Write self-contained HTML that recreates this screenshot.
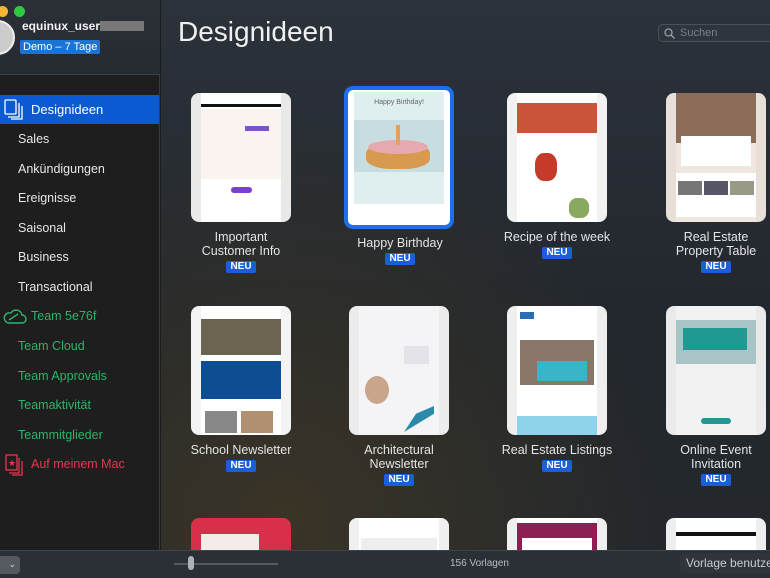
<!DOCTYPE html>
<html><head><meta charset="utf-8"><style>
*{margin:0;padding:0;box-sizing:border-box}
body{width:770px;height:578px;overflow:hidden;position:relative;font-family:"Liberation Sans",sans-serif;background:#1c1c1e}
.side{position:absolute;left:0;top:0;width:160px;height:550px;background:#1e1e1e;border-right:1px solid #3a3a3a}
.shead{position:absolute;left:0;top:0;width:160px;height:75px;background:linear-gradient(#2b3036,#262b31);border-bottom:1px solid #3c4046}
.main{position:absolute;left:161px;top:0;width:609px;height:550px;background:radial-gradient(ellipse at 20% 95%,#3a3426 0%,rgba(40,40,36,0) 55%),linear-gradient(#2c323a,#22272d 60%,#24282c)}
.it{position:absolute;font-size:12.5px;color:#e6e6e6;left:18px}
.g{color:#2fb36a}
.card{position:absolute;width:100px;height:129px;background:#e9e9e9;border-radius:8px;overflow:hidden}
.pg{position:absolute;left:10px;right:10px;top:0;bottom:0;background:#fff}
.b{position:absolute}
.lbl{position:absolute;width:160px;text-align:center;font-size:12.5px;color:#e4e4e4;line-height:14px}
.neu{display:inline-block;background:#1b5fd6;color:#fff;font-weight:bold;font-size:10px;padding:0 4px;line-height:12px;border-radius:2px}
.bar{position:absolute;left:0;top:550px;width:770px;height:28px;background:#2b3036;border-top:1px solid #3f444a}
</style></head><body>
<div class="side">
 <div class="shead">
  <div style="position:absolute;left:-3px;top:6px;width:11px;height:11px;border-radius:50%;background:#f5b731"></div>
  <div style="position:absolute;left:14px;top:6px;width:11px;height:11px;border-radius:50%;background:#2ec841"></div>
  <div style="position:absolute;left:-20px;top:20px;width:35px;height:35px;border-radius:50%;background:#ccc;border:2px solid #eee"></div>
  <div style="position:absolute;left:22px;top:19px;font-size:12px;font-weight:bold;color:#f2f2f2">equinux_user<span style="display:inline-block;width:44px;height:10px;background:#777;vertical-align:-1px"></span></div>
  <div style="position:absolute;left:20px;top:40px;background:#1a74d6;color:#fff;font-size:11px;padding:1px 3px;border-radius:2px">Demo – 7 Tage</div>
 </div>
 <div style="position:absolute;left:0;top:95px;width:159px;height:29px;background:#0b5ad4"></div>
 <svg style="position:absolute;left:3px;top:98px" width="22" height="22" viewBox="0 0 22 22" fill="none" stroke="#fff" stroke-width="1.3"><rect x="2" y="2" width="11" height="14" rx="1"/><path d="M5 19h11V5"/><path d="M8 21h11V8"/></svg>
 <div class="it" style="left:31px;top:102px;color:#fff;font-size:13px">Designideen</div>
 <div class="it" style="top:132px">Sales</div>
 <div class="it" style="top:162px">Ankündigungen</div>
 <div class="it" style="top:191px">Ereignisse</div>
 <div class="it" style="top:221px">Saisonal</div>
 <div class="it" style="top:250px">Business</div>
 <div class="it" style="top:280px">Transactional</div>
 <svg style="position:absolute;left:2px;top:306px" width="26" height="20" viewBox="0 0 26 20" fill="none" stroke="#2fb36a" stroke-width="1.4"><path d="M6 17h14a4 4 0 0 0 0-8 6 6 0 0 0-11-2 5 5 0 0 0-3 10z"/><path d="M7 14l9-6"/></svg>
 <div class="it g" style="left:31px;top:309px">Team 5e76f</div>
 <div class="it g" style="top:339px">Team Cloud</div>
 <div class="it g" style="top:369px">Team Approvals</div>
 <div class="it g" style="top:398px">Teamaktivität</div>
 <div class="it g" style="top:428px">Teammitglieder</div>
 <svg style="position:absolute;left:4px;top:453px" width="20" height="24" viewBox="0 0 20 24" fill="none" stroke="#e2384f" stroke-width="1.3"><rect x="2" y="2" width="11" height="15"/><path d="M5 20h10V5"/><path d="M8 22h10V8"/><text x="4" y="13" fill="#e2384f" stroke="none" font-size="9">★</text></svg>
 <div class="it" style="left:31px;top:457px;color:#e2384f">Auf meinem Mac</div>
</div>
<div class="main">
 <div style="position:absolute;left:17px;top:16px;font-size:28px;color:#f0f0f0">Designideen</div>
 <div style="position:absolute;left:497px;top:24px;width:120px;height:18px;border:1px solid #4a5058;border-radius:5px;background:#2f353c;color:#7b8088;font-size:11px;padding:2px 0 0 21px">Suchen
  <svg style="position:absolute;left:5px;top:3px" width="11" height="11" viewBox="0 0 11 11" fill="none" stroke="#9a9fa6" stroke-width="1.3"><circle cx="4.5" cy="4.5" r="3.5"/><path d="M7 7l3.5 3.5"/></svg></div>
</div>

<div class="card" style="left:191px;top:93px"><div class="pg" style="background:#fff"><div class="b" style="left:0;right:0;top:11px;height:3px;background:#111"></div><div class="b" style="left:0;right:0;top:16px;height:70px;background:#fbf3ef"></div><div class="b" style="left:44px;top:33px;width:24px;height:5px;background:#7a55c8"></div><div class="b" style="left:30px;top:94px;width:21px;height:6px;border-radius:3px;background:#7a3fd0"></div></div></div>
<div style="position:absolute;left:344px;top:86px;width:110px;height:143px;border:4px solid #1d6ff0;border-radius:9px;background:#fff;overflow:hidden"><div class="b" style="left:6px;top:2px;width:90px;height:112px;background:#dfeff0"></div><div class="b" style="left:6px;top:30px;width:90px;height:52px;background:#c7dde0"></div><div class="b" style="left:18px;top:53px;width:64px;height:26px;border-radius:40%;background:#d79a4f"></div><div class="b" style="left:20px;top:50px;width:60px;height:14px;border-radius:50%;background:#e6a9b0"></div><div class="b" style="left:48px;top:35px;width:4px;height:20px;background:#e0a060"></div><div style="position:absolute;left:0;width:102px;top:9px;text-align:center;font-size:7px;color:#666">Happy Birthday!</div></div>
<div class="card" style="left:507px;top:93px;background:#f2f2f2"><div class="pg"><div class="b" style="left:0;right:0;top:10px;height:30px;background:#c8553a"></div><div class="b" style="left:18px;top:60px;width:22px;height:28px;background:#c53a2a;border-radius:40%"></div><div class="b" style="left:52px;top:105px;width:20px;height:20px;background:#8aa860;border-radius:40%"></div></div></div>
<div class="card" style="left:666px;top:93px;background:#e8e0d8"><div class="pg" style="background:#efe7df"><div class="b" style="left:0;right:0;top:0;height:50px;background:#8c6b58"></div><div class="b" style="left:5px;top:43px;width:70px;height:30px;background:#fff"></div><div class="b" style="left:0;top:80px;width:80px;height:44px;background:#fff"></div><div class="b" style="left:2px;top:88px;width:24px;height:14px;background:#777"></div><div class="b" style="left:28px;top:88px;width:24px;height:14px;background:#556"></div><div class="b" style="left:54px;top:88px;width:24px;height:14px;background:#998"></div></div></div>

<div class="lbl" style="left:161px;top:230px">Important<br>Customer Info<br><span class="neu">NEU</span></div>
<div class="lbl" style="left:320px;top:236px">Happy Birthday<br><span class="neu">NEU</span></div>
<div class="lbl" style="left:477px;top:230px">Recipe of the week<br><span class="neu">NEU</span></div>
<div class="lbl" style="left:636px;top:230px">Real Estate<br>Property Table<br><span class="neu">NEU</span></div>

<div class="card" style="left:191px;top:306px;background:#f4f4f4"><div class="pg"><div class="b" style="left:0;right:0;top:13px;height:36px;background:#6b6450"></div><div class="b" style="left:0;right:0;top:55px;height:38px;background:#0f4d93"></div><div class="b" style="left:4px;top:105px;width:32px;height:22px;background:#888"></div><div class="b" style="left:40px;top:105px;width:32px;height:22px;background:#b09070"></div></div></div>
<div class="card" style="left:349px;top:306px;background:#ececec"><div class="pg" style="background:#f4f4f6"><div class="b" style="left:6px;top:70px;width:24px;height:28px;border-radius:50%;background:#c9a58c"></div><div class="b" style="left:45px;top:100px;width:30px;height:26px;background:#2a8aa8;clip-path:polygon(100% 0,100% 30%,0 100%,40% 30%)"></div><div class="b" style="left:45px;top:40px;width:25px;height:18px;background:#e2e4ea"></div></div></div>
<div class="card" style="left:507px;top:306px;background:#efefef"><div class="pg"><div class="b" style="left:3px;top:6px;width:14px;height:7px;background:#2a6db5"></div><div class="b" style="left:3px;top:34px;width:74px;height:45px;background:#8a7668"></div><div class="b" style="left:20px;top:55px;width:50px;height:20px;background:#3ab5c8"></div><div class="b" style="left:0;right:0;top:110px;height:20px;background:#8fd2ec"></div></div></div>
<div class="card" style="left:666px;top:306px;background:#eaeaea"><div class="pg" style="background:#f2f2f2"><div class="b" style="left:0;right:0;top:14px;height:44px;background:#a8c4c6"></div><div class="b" style="left:7px;top:22px;width:64px;height:22px;background:#1e9a92"></div><div class="b" style="left:25px;top:112px;width:30px;height:6px;border-radius:3px;background:#1e9a92"></div></div></div>

<div class="lbl" style="left:161px;top:443px">School Newsletter<br><span class="neu">NEU</span></div>
<div class="lbl" style="left:319px;top:443px">Architectural<br>Newsletter<br><span class="neu">NEU</span></div>
<div class="lbl" style="left:477px;top:443px">Real Estate Listings<br><span class="neu">NEU</span></div>
<div class="lbl" style="left:636px;top:443px">Online Event<br>Invitation<br><span class="neu">NEU</span></div>

<div class="card" style="left:191px;top:518px;height:40px;background:#d8304a"><div class="b" style="left:10px;top:16px;width:58px;height:24px;background:#f4ece8"></div></div>
<div class="card" style="left:349px;top:518px;height:40px;background:#f0f0f0"><div class="pg"><div class="b" style="left:2px;top:20px;width:76px;height:20px;background:#eee"></div></div></div>
<div class="card" style="left:507px;top:518px;height:40px;background:#efefef"><div class="pg"><div class="b" style="left:0;right:0;top:5px;height:30px;background:#8d1f55"></div><div class="b" style="left:5px;top:20px;width:70px;height:20px;background:#fff"></div></div></div>
<div class="card" style="left:666px;top:518px;height:40px;background:#eee"><div class="pg"><div class="b" style="left:0;right:0;top:14px;height:4px;background:#111"></div></div></div>

<div class="bar">
 <div style="position:absolute;left:-4px;top:5px;width:24px;height:18px;background:#555a60;border-radius:4px;color:#ddd;font-size:9px;text-align:right;padding:3px 4px 0 0">⌄</div>
 <div style="position:absolute;left:174px;top:12px;width:104px;height:2px;background:#555a60"></div>
 <div style="position:absolute;left:188px;top:5px;width:6px;height:14px;border-radius:3px;background:#aeb2b8"></div>
 <div style="position:absolute;left:450px;top:7px;font-size:10px;color:#b8bcc2">156 Vorlagen</div>
 <div style="position:absolute;left:680px;top:2px;width:95px;height:20px;background:#30353c;border-radius:4px;color:#c8ccd2;font-size:12px;padding:3px 0 0 6px;white-space:nowrap">Vorlage benutzen</div>
</div>
</body></html>
